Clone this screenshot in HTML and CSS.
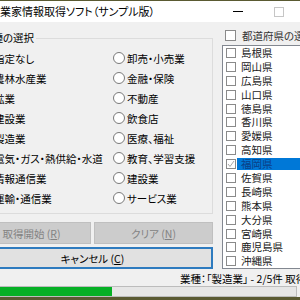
FILE: index.html
```html
<!DOCTYPE html>
<html lang="ja">
<head>
    <meta charset="UTF-8">
    <title>企業情報取得ソフト</title>
    <link rel="stylesheet" href="styles.css">
</head>
<body>
    <div class="window">
        <div class="titlebar">
            <span class="title">業家情報取得ソフト（サンプル版）</span>
            <span class="btn-min"></span>
            <span class="btn-max"></span>
        </div>
        <div class="client">
            <div class="left">
                <fieldset class="group">
                    <legend>業種の選択</legend>
                    <div class="radios">
                        <div class="col">
                            <div class="radio"><span class="dot"></span>指定なし</div>
                            <div class="radio"><span class="dot"></span>農林水産業</div>
                            <div class="radio"><span class="dot"></span>鉱業</div>
                            <div class="radio"><span class="dot"></span>建設業</div>
                            <div class="radio"><span class="dot"></span>製造業</div>
                            <div class="radio"><span class="dot"></span>電気・ガス・熱供給・水道</div>
                            <div class="radio"><span class="dot"></span>情報通信業</div>
                            <div class="radio"><span class="dot"></span>運輸・通信業</div>
                        </div>
                        <div class="col">
                            <div class="radio"><span class="dot"></span>卸売・小売業</div>
                            <div class="radio"><span class="dot"></span>金融・保険</div>
                            <div class="radio"><span class="dot"></span>不動産</div>
                            <div class="radio"><span class="dot"></span>飲食店</div>
                            <div class="radio"><span class="dot"></span>医療、福祉</div>
                            <div class="radio"><span class="dot"></span>教育、学習支援</div>
                            <div class="radio"><span class="dot"></span>建設業</div>
                            <div class="radio"><span class="dot"></span>サービス業</div>
                        </div>
                    </div>
                </fieldset>
                <div class="btn-row">
                    <button disabled>取得開始 (<u>R</u>)</button>
                    <button disabled>クリア (<u>N</u>)</button>
                </div>
                <button class="cancel">キャンセル (<u>C</u>)</button>
            </div>
            <div class="right">
                <div class="all"><span class="box"></span>都道府県の選択</div>
                <div class="list">
                    <div class="item"><span class="box"></span><span class="name">島根県</span></div>
                    <div class="item"><span class="box"></span><span class="name">岡山県</span></div>
                    <div class="item"><span class="box"></span><span class="name">広島県</span></div>
                    <div class="item"><span class="box"></span><span class="name">山口県</span></div>
                    <div class="item"><span class="box"></span><span class="name">徳島県</span></div>
                    <div class="item"><span class="box"></span><span class="name">香川県</span></div>
                    <div class="item"><span class="box"></span><span class="name">愛媛県</span></div>
                    <div class="item"><span class="box"></span><span class="name">高知県</span></div>
                    <div class="item selected">
                        <span class="box"><svg width="8" height="8" viewBox="0 0 8 8"><polyline points="1,4 3,6.5 7,1" fill="none" stroke="#a8a8a8" stroke-width="1"/></svg></span>
                        <span class="name">福岡県</span>
                    </div>
                    <div class="item"><span class="box"></span><span class="name">佐賀県</span></div>
                    <div class="item"><span class="box"></span><span class="name">長崎県</span></div>
                    <div class="item"><span class="box"></span><span class="name">熊本県</span></div>
                    <div class="item"><span class="box"></span><span class="name">大分県</span></div>
                    <div class="item"><span class="box"></span><span class="name">宮崎県</span></div>
                    <div class="item"><span class="box"></span><span class="name">鹿児島県</span></div>
                    <div class="item"><span class="box"></span><span class="name">沖縄県</span></div>
                </div>
            </div>
        </div>
        <div class="status">業種：「製造業」 - 2/5件 取得中...</div>
        <div class="progress"><div class="fill" style="width: 40%"></div></div>
    </div>
</body>
</html>
```

FILE: styles.css
```css
* {
    box-sizing: border-box;
}
body {
    margin: 0;
    width: 300px;
    height: 300px;
    overflow: hidden;
    background: #5a5a32;
    font-family: "Noto Sans CJK JP", "Noto Sans", sans-serif;
    font-size: 10.5px;
    font-feature-settings: "palt";
    color: #000;
}
.window {
    margin-top: 1px;
    height: 296px;
    background: #f0f0f0;
    display: flex;
    flex-direction: column;
    overflow: hidden;
}
.titlebar {
    height: 21px;
    flex: none;
    background: #fff;
    display: flex;
    align-items: center;
}
.title {
    flex: 1;
    font-size: 11px;
    line-height: 21px;
    white-space: nowrap;
}
.btn-min {
    width: 10px;
    height: 1px;
    background: #000;
}
.btn-max {
    width: 10px;
    height: 10px;
    margin-left: 31px;
    margin-right: 16px;
    border: 1px solid #c6c6c6;
}
.client {
    height: 247px;
    flex: none;
    display: flex;
    gap: 9px;
    margin-left: -28px;
}
.left {
    width: 241px;
    flex: none;
    padding-top: 9px;
}
.group {
    margin: 0 0 0 3px;
    padding: 3px 0 5px 4px;
    min-inline-size: 0;
    border: 1px solid #dcdcdc;
}
.group legend {
    padding: 0 2px;
    line-height: 14px;
}
.radios {
    display: flex;
}
.col {
    width: 133px;
    flex: none;
}
.radio {
    height: 20px;
    display: flex;
    align-items: center;
    gap: 2px;
    white-space: nowrap;
}
.dot {
    width: 12px;
    height: 12px;
    flex: none;
    border: 1px solid #7a7a7a;
    border-radius: 50%;
    background: #fff;
}
.btn-row {
    display: flex;
    gap: 3px;
    margin-top: 8px;
}
button {
    height: 22px;
    padding: 0;
    font: inherit;
    color: #000;
    background: #e1e1e1;
    border: 1px solid #adadad;
}
.btn-row button {
    flex: 1;
}
button:disabled {
    background: #cccccc;
    border-color: #bfbfbf;
    color: #838383;
}
.cancel {
    display: block;
    width: 100%;
    margin-top: 3px;
    border: 2px solid #2e7bbf;
}
.right {
    width: 110px;
    flex: none;
}
.all {
    height: 14px;
    margin-top: 6px;
    padding-left: 3px;
    display: flex;
    align-items: center;
    gap: 6px;
    white-space: nowrap;
    color: #333;
}
.all .box {
    width: 11px;
    height: 11px;
}
.box {
    width: 10px;
    height: 10px;
    flex: none;
    display: flex;
    align-items: center;
    justify-content: center;
    border: 1px solid #8a8a8a;
    background: #fff;
}
.list {
    margin-top: 3px;
    height: 224px;
    border: 1px solid #828790;
    background: #fff;
    overflow: hidden;
}
.item {
    height: 13.9px;
    padding-left: 3px;
    display: flex;
    align-items: center;
    color: #1a1a1a;
}
.name {
    flex: 1;
    margin-left: 1px;
    padding-left: 4px;
    height: 12px;
    line-height: 12px;
    white-space: nowrap;
}
.selected .name {
    background: #0078d7;
    color: #0b3f86;
}
.status {
    height: 17px;
    flex: none;
    padding: 2px 0 0 180px;
    line-height: 15px;
    white-space: nowrap;
    overflow: hidden;
}
.progress {
    height: 11px;
    flex: none;
    margin: 0 3px 0 -11px;
    border: 1px solid #bcbcbc;
    background: #e6e6e6;
}
.fill {
    height: 100%;
    background: #06b025;
}
```
